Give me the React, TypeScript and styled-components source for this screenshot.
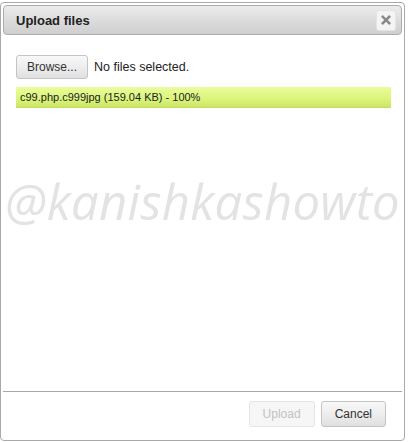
import React from 'react';
import styled, { createGlobalStyle } from 'styled-components';

const GlobalStyle = createGlobalStyle`
  html, body {
    margin: 0;
    padding: 0;
    background: #ffffff;
  }
  body {
    font-family: "Liberation Sans", Arial, sans-serif;
  }
`;

const Dialog = styled.div`
  box-sizing: border-box;
  margin-top: 2px;
  width: 405px;
  height: 439px;
  border: 1px solid #a9a9a9;
  border-radius: 4px;
  padding: 2px;
  display: flex;
  flex-direction: column;
  background: #fff;
  overflow: hidden;
`;

const TitleBar = styled.div`
  box-sizing: border-box;
  height: 30px;
  display: flex;
  align-items: center;
  justify-content: space-between;
  padding: 0 5px 0 12px;
  border: 1px solid #acacac;
  border-radius: 4px;
  background: linear-gradient(to bottom, #ececec 0%, #dcdcdc 50%, #cfcfcf 100%);
`;

const Title = styled.span`
  font-size: 13px;
  font-weight: bold;
  color: #222;
`;

const CloseButton = styled.button`
  box-sizing: border-box;
  width: 20px;
  height: 21px;
  padding: 0;
  border: 1px solid #e4e4e4;
  border-radius: 3px;
  background: #f4f4f4;
  display: flex;
  align-items: center;
  justify-content: center;
`;

const Content = styled.div`
  flex: 1;
  position: relative;
  padding: 20px 12px 0 13px;
  display: flex;
  flex-direction: column;
  gap: 8px;
`;

const FileRow = styled.div`
  display: flex;
  align-items: center;
  gap: 6px;
`;

const Button = styled.button<{ disabled?: boolean }>`
  box-sizing: border-box;
  height: 24px;
  padding: 0 10px;
  font-family: "Liberation Sans", Arial, sans-serif;
  font-size: 12px;
  color: ${props => (props.disabled ? '#c2c2c2' : '#333')};
  border: 1px solid ${props => (props.disabled ? '#e4e4e4' : '#c4c4c4')};
  border-radius: 3px;
  background: ${props =>
    props.disabled
      ? '#f6f6f6'
      : 'linear-gradient(to bottom, #f8f8f8 0%, #ececec 55%, #e0e0e0 100%)'};
`;

const FileLabel = styled.span`
  font-size: 12.5px;
  color: #222;
`;

const Progress = styled.div`
  box-sizing: border-box;
  width: 375px;
  height: 21px;
  display: flex;
  align-items: center;
  padding-left: 4px;
  font-size: 11px;
  color: #222;
  background: linear-gradient(to bottom, #eafc9a 0%, #dcf57e 55%, #cde666 100%);
  border-bottom: 1px solid #c4dc62;
`;

const Watermark = styled.div`
  position: absolute;
  left: 2px;
  top: 133px;
  white-space: nowrap;
  font-family: "Open Sans", "DejaVu Sans", sans-serif;
  font-style: italic;
  font-size: 49px;
  letter-spacing: 0.3px;
  color: #e3e3e3;
  pointer-events: none;
`;

const ButtonPane = styled.div`
  box-sizing: border-box;
  height: 47px;
  border-top: 1px solid #a9a9a9;
  display: flex;
  justify-content: flex-end;
  align-items: flex-start;
  gap: 6px;
  padding: 9px 16px 0 0;
`;

const PaneButton = styled(Button)`
  height: 26px;
  min-width: 64px;
  padding: 0 13px;
`;

const App: React.FC = () => (
  <>
    <GlobalStyle />
    <Dialog>
      <TitleBar>
        <Title>Upload files</Title>
        <CloseButton aria-label="close">
          <svg width="10" height="10" viewBox="0 0 10 10">
            <path d="M1.8 1.8 L8.2 8.2 M8.2 1.8 L1.8 8.2" stroke="#8a8a8a" strokeWidth="2.6" strokeLinecap="square" />
          </svg>
        </CloseButton>
      </TitleBar>
      <Content>
        <FileRow>
          <Button>Browse...</Button>
          <FileLabel>No files selected.</FileLabel>
        </FileRow>
        <Progress>c99.php.c999jpg (159.04 KB) - 100%</Progress>
        <Watermark>@kanishkashowto</Watermark>
      </Content>
      <ButtonPane>
        <PaneButton disabled>Upload</PaneButton>
        <PaneButton>Cancel</PaneButton>
      </ButtonPane>
    </Dialog>
  </>
);

export default App;
